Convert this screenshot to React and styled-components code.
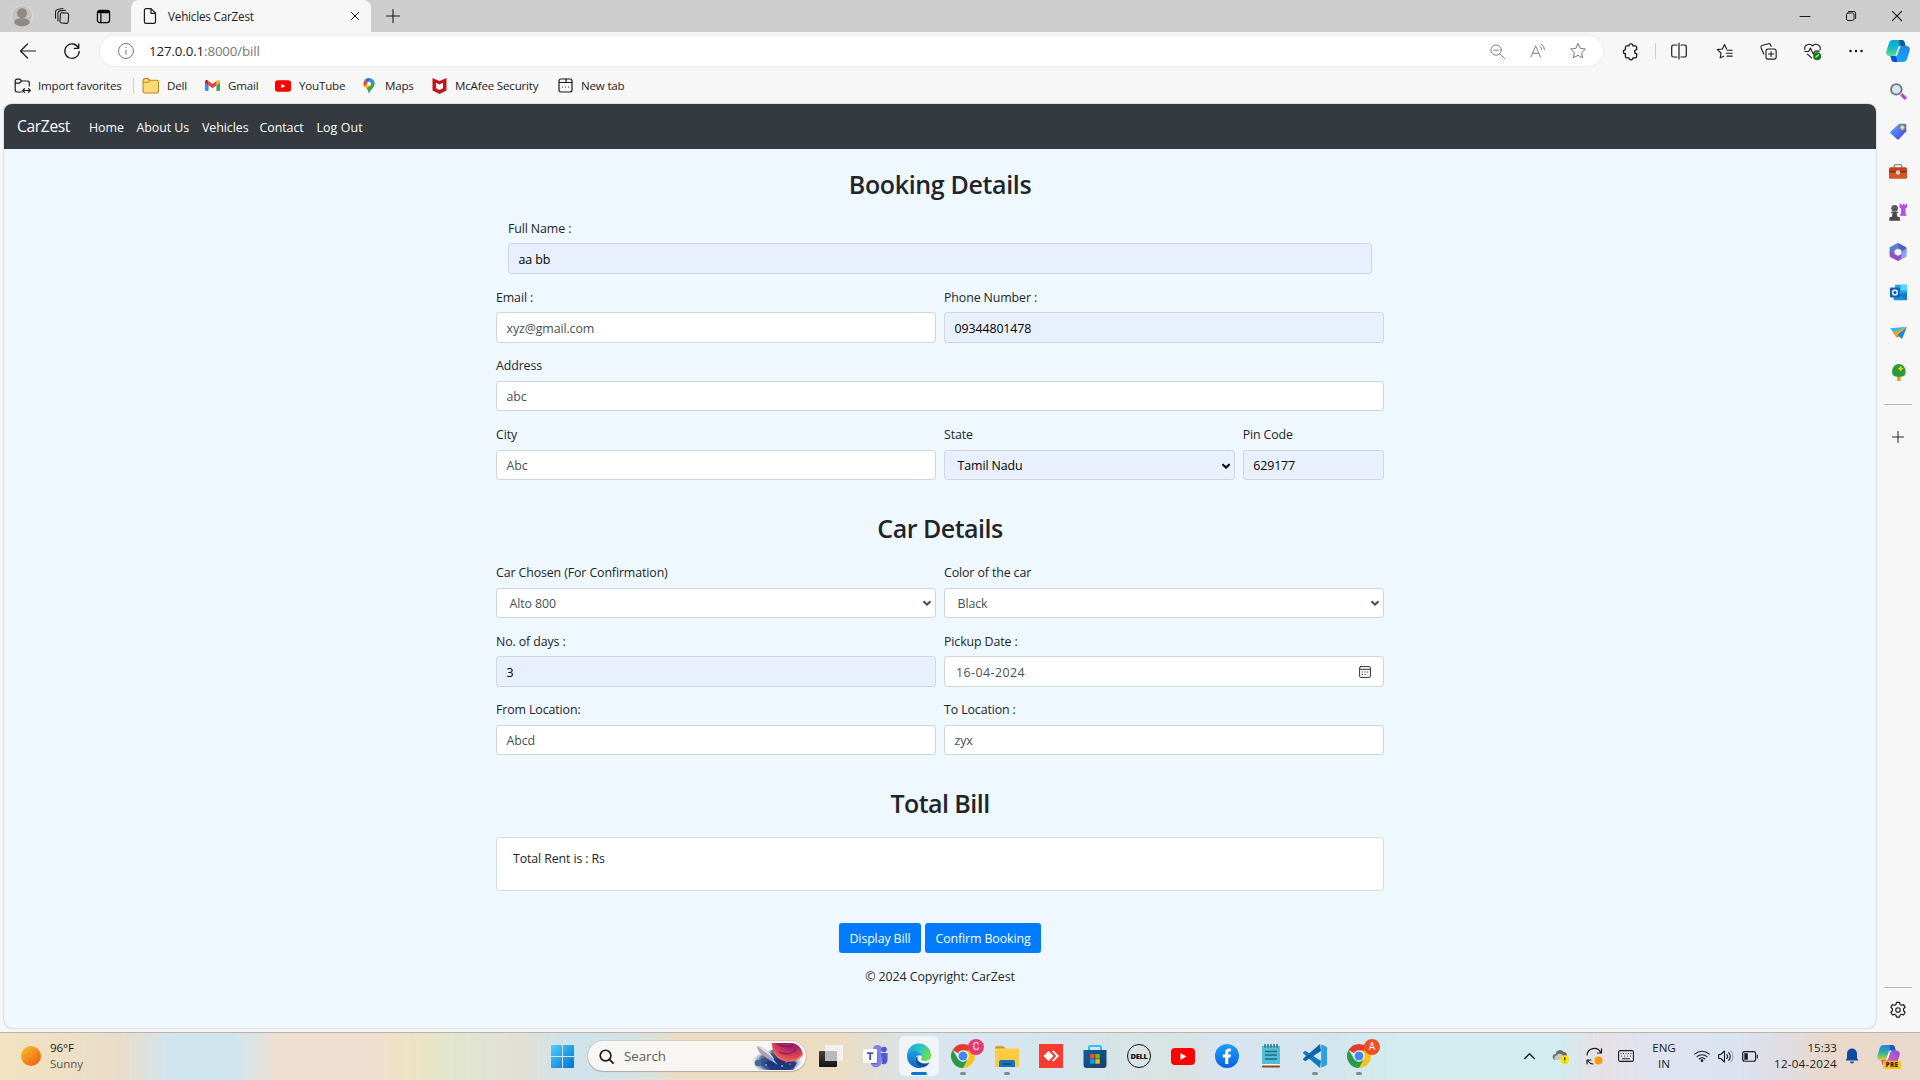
import React from 'react';
import styled, { createGlobalStyle } from 'styled-components';

const Global = createGlobalStyle`
  * { box-sizing: border-box; }
  html, body { margin: 0; padding: 0; width: 1920px; height: 1080px; overflow: hidden; }
  body { font-family: 'Segoe UI', 'Open Sans', 'Noto Sans', sans-serif; background: #f7f7f7; }
  svg { display: block; flex: none; overflow: visible; }
`;

const Text = styled.span`
  font-size: ${(p) => p.$size || 12.4}px;
  letter-spacing: ${(p) => (p.$ls === undefined ? -0.12 : p.$ls)}px;
  font-weight: ${(p) => p.$weight || 400};
  color: ${(p) => p.$color || 'inherit'};
  white-space: pre;
`;

/* ---------- layout shells ---------- */
const Screen = styled.div`
  width: 1920px;
  height: 1080px;
  display: flex;
  flex-direction: column;
  background: #f7f7f7;
  color: #1b1b1b;
`;
const TabStrip = styled.header`
  height: 32px;
  flex: none;
  display: flex;
  align-items: center;
  background: #cdcdcd;
`;
const Slot = styled.div`
  width: ${(p) => p.$w}px;
  height: 100%;
  display: flex;
  align-items: center;
  justify-content: center;
  flex: none;
`;
const Spacer = styled.div`
  flex: ${(p) => (p.$w ? 'none' : 1)};
  width: ${(p) => (p.$w ? p.$w + 'px' : 'auto')};
`;
const Tab = styled.div`
  width: 240px;
  height: 32px;
  display: flex;
  align-items: center;
  background: #f7f7f7;
  border-radius: 8px 8px 0 0;
  padding: 0 12px 1px 12px;
  gap: 11px;
  margin-left: 6px;
`;
const Toolbar = styled.div`
  height: 38px;
  flex: none;
  display: flex;
  align-items: center;
`;
const AddressBar = styled.div`
  width: 1503px;
  height: 30px;
  border-radius: 15px;
  background: #fff;
  box-shadow: 0 0 3px rgba(0, 0, 0, 0.09);
  display: flex;
  align-items: center;
  padding: 0 5px 0 18px;
`;
const Favorites = styled.nav`
  height: 34px;
  flex: none;
  padding: 0 0 3px 14px;
  display: flex;
  align-items: center;
`;
const Favorite = styled.div`
  display: flex;
  align-items: center;
  gap: ${(p) => p.$gap || 8}px;
  width: ${(p) => p.$w}px;
`;
const Rule = styled.div`
  width: 1px;
  height: 16px;
  background: #cfcfcf;
`;
const Body = styled.div`
  height: 928px;
  flex: none;
  display: flex;
  padding-left: 4px;
`;
const Page = styled.main`
  width: 1872px;
  height: 924px;
  background: #f0f8ff;
  border-radius: 8px;
  overflow: hidden;
  box-shadow: 0 0 2px rgba(0, 0, 0, 0.35);
`;
const Sidebar = styled.aside`
  width: 44px;
  height: 961px;
  display: flex;
  flex-direction: column;
  align-items: center;
  margin-top: -33px;
`;
const SideSlot = styled.div`
  height: ${(p) => p.$h || 40.2}px;
  flex: none;
  display: flex;
  align-items: center;
  justify-content: center;
`;
const SideRule = styled.div`
  width: 28px;
  height: 1px;
  flex: none;
  background: #b8b8b8;
  margin-top: ${(p) => p.$top || 0}px;
`;

/* ---------- CarZest page ---------- */
const Navbar = styled.nav`
  height: 45px;
  background: #343a40;
  color: #fff;
  display: flex;
  align-items: center;
  padding: 0 0 2px 13px;
`;
const NavItem = styled.a`
  width: ${(p) => p.$w}px;
`;
const Form = styled.section`
  width: 888px;
  margin: 0 auto;
  color: #212529;
`;
const Heading = styled.h2`
  margin: 0;
  padding-top: ${(p) => p.$top}px;
  height: ${(p) => p.$h}px;
  text-align: center;
  font-size: 25px;
  line-height: 30.7px;
  font-weight: 500;
`;
const Row = styled.div`
  display: grid;
  grid-template-columns: ${(p) => p.$cols || '1fr'};
  gap: 8px;
  padding: 0 ${(p) => p.$inset || 0}px;
  margin-bottom: 12.8px;
`;
const Field = styled.div`
  display: flex;
  flex-direction: column;
  min-width: 0;
`;
const Label = styled.label`
  height: 25.6px;
  line-height: 18.4px;
`;
const Control = styled.div`
  height: 30.4px;
  border: 1px solid #ced4da;
  border-radius: 3.2px;
  background: ${(p) => (p.$filled ? '#e8f0fe' : '#fff')};
  color: ${(p) => (p.$filled ? '#000' : '#495057')};
  display: flex;
  align-items: center;
  justify-content: space-between;
  padding: 1.4px ${(p) => p.$right || 3}px 0 ${(p) => p.$left || 9.6}px;
`;
const BillCard = styled.div`
  height: 54px;
  border: 1px solid #d9dcdf;
  border-radius: 3.2px;
  background: #fff;
  padding: 9px 16px;
  line-height: 20px;
`;
const Actions = styled.div`
  display: flex;
  justify-content: center;
  gap: 4px;
  margin-top: 32px;
`;
const Button = styled.button`
  width: ${(p) => p.$w}px;
  height: 30px;
  border: 0;
  border-radius: 3px;
  background: #007bff;
  color: #fff;
  font-family: inherit;
  padding: 0;
`;
const Copyright = styled.footer`
  margin-top: 12px;
  text-align: center;
  line-height: 20px;
`;

/* ---------- Taskbar ---------- */
const Taskbar = styled.footer`
  height: 48px;
  flex: none;
  border-top: 1px solid #b3b4b4;
  padding-bottom: 1px;
  display: flex;
  align-items: center;
  background: linear-gradient(90deg, #f2e2bf 0, #ecdfc6 80px, #eadccb 120px, #d1e5ee 170px, #d1e5ee 235px, #efdfd0 280px, #efdfd0 370px, #eee3c2 410px, #e1e6cf 450px, #e0e0d6 525px, #cfe3ec 575px, #d6e2e2 640px, #ecdcc2 680px, #ecdcc2 840px, #e0dfda 880px, #d8e5ef 930px, #d5e5ee 1040px, #d8e4e4 1140px, #d9e3e2 1180px, #d9e4f1 1230px, #d4e5ec 1330px, #d2ecef 1400px, #d2ecef 1560px, #e6e0e4 1600px, #dfe3f0 1650px, #dbe3f0 1740px, #e0dce2 1785px, #ead8ca 1830px, #ecd9ce 1920px);
`;
const Stack = styled.div`
  width: ${(p) => p.$w}px;
  display: flex;
  flex-direction: column;
  align-items: ${(p) => p.$align || 'flex-start'};
  line-height: 16px;
  flex: none;
`;
const SearchPill = styled.div`
  width: 218px;
  height: 30px;
  margin: 0 3px 0 14px;
  border-radius: 15px;
  background: #f7f6f2;
  box-shadow: 0 0 0 1px rgba(150, 150, 140, 0.25), 0 1px 1px rgba(0, 0, 0, 0.2);
  display: flex;
  align-items: center;
  gap: 10px;
  padding: 0 3px 0 11px;
`;
const AppTile = styled.div`
  position: relative;
  width: 38px;
  height: 38px;
  margin: 0 3px;
  flex: none;
  display: flex;
  align-items: center;
  justify-content: center;
  border-radius: 4px;
  background: ${(p) => (p.$active ? 'rgba(255,255,255,.6)' : 'transparent')};
  box-shadow: ${(p) => (p.$active ? '0 0 0 1px rgba(255,255,255,.5)' : 'none')};
  &::after {
    content: '';
    position: absolute;
    bottom: 0;
    left: 50%;
    transform: translateX(-50%);
    width: ${(p) => (p.$active ? 16 : p.$running ? 6 : 0)}px;
    height: 3px;
    border-radius: 2px;
    background: ${(p) => (p.$active ? '#0078d4' : '#858b8f')};
  }
`;
const Badge = styled.span`
  position: absolute;
  top: 2px;
  right: -2px;
  width: 16px;
  height: 16px;
  border-radius: 50%;
  background: ${(p) => p.$bg};
  color: #fff;
  font: 10px/16px Roboto, sans-serif;
  text-align: center;
`;

/* ---------- icons ---------- */
const Line = ({ w = 20, h, vb, c = '#1b1b1b', sw = 1.2, children }) => (
  <svg width={w} height={h || w} viewBox={vb || '0 0 20 20'} fill="none" stroke={c} strokeWidth={sw} strokeLinecap="round" strokeLinejoin="round">{children}</svg>
);
const Pic = ({ w = 24, h, vb = '0 0 24 24', children }) => (
  <svg width={w} height={h || w} viewBox={vb}>{children}</svg>
);

const Avatar = () => (
  <Pic w={22}>
    <circle cx="12" cy="12" r="11.5" fill="#c3c1bf" stroke="#dddbd8" />
    <circle cx="12" cy="9" r="5.4" fill="#8d8883" />
    <path d="M3.5 19.5c0-4 4-5 8.5-5s8.500 1 8.500 5a11 11 0 0 1-17 0z" fill="#8d8883" />
  </Pic>
);
const Workspaces = () => (
  <Line w={18}>
    <path d="M9.800 6.500h5.400a2 2 0 0 1 2 2v7.500a2 2 0 0 1-2 2H10a2 2 0 0 1-2-2V8.500a2 2 0 0 1 1.800-2z" transform="rotate(4 12 12)" />
    <path d="M5.500 15.500V7a2.800 2.800 0 0 1 2.300-2.700L14 3.600M2.800 12.500V5.500A2.800 2.800 0 0 1 5 2.800l6-1.200" />
  </Line>
);
const TabActions = () => (
  <Line w={15} vb="0 0 16 16" c="#000" sw={1.3}>
    <rect x="1.500" y="1.500" width="13" height="13" rx="2.500" />
    <path d="M2.500 3.200h11" strokeWidth="2.600" />
    <path d="M5.200 5v9" strokeWidth="1.300" />
  </Line>
);
const FileIcon = () => (
  <Line w={14} h={16} vb="0 0 14 16"><path d="M3 .7h5l4.500 4.500v8.500a1.600 1.600 0 0 1-1.600 1.600H3a1.600 1.600 0 0 1-1.600-1.600V2.300A1.600 1.600 0 0 1 3 .7zM8 .9v4.500h4.300" /></Line>
);
const Cross = ({ w = 8 }) => <Line w={w} vb="0 0 8 8" sw={1}><path d="M.3.3l7.400 7.400M7.700.3L.3 7.700" /></Line>;
const Plus = ({ w = 14 }) => <Line w={w} vb="0 0 14 14" sw={1.1}><path d="M7 .5v13M.5 7h13" /></Line>;
const StarPath = 'M10 1.800l2.500 5.200 5.700.8-4.100 4 1 5.700-5.100-2.700-5.100 2.700 1-5.700-4.100-4 5.700-.8z';

const FolderGold = () => (
  <Pic w={17} vb="0 0 16 16"><path d="M1 3a1.500 1.500 0 0 1 1.500-1.500h3.200L7.500 3H14A1.500 1.500 0 0 1 15.500 4.500v9A1.500 1.500 0 0 1 14 15H2.500A1.500 1.500 0 0 1 1 13.500z" fill="#ffd977" stroke="#b58a18" /><path d="M1 5h4.800L7.500 3.200" fill="none" stroke="#b58a18" /></Pic>
);
const Gmail = () => (
  <Pic w={15} h={11} vb="0 0 30 22">
    <path d="M2 22h5V10L0 5v15a2 2 0 0 0 2 2z" fill="#4285f4" /><path d="M23 22h5a2 2 0 0 0 2-2V5l-7 5z" fill="#34a853" />
    <path d="M23 2v8.500l7-5V3c0-2.800-3-4-5-2.500z" fill="#fbbc04" /><path d="M7 10.500V2l8 6 8-6v8.500l-8 6z" fill="#ea4335" /><path d="M0 3v2.500l7 5V2L5 .5C3-1 0 .2 0 3z" fill="#c5221f" />
  </Pic>
);
const YouTube = ({ w = 16, h = 12 }) => (
  <Pic w={w} h={h} vb="0 0 24 17"><rect width="24" height="17" rx="4" fill="#f00" /><path d="M9.500 5v7l6-3.500z" fill="#fff" /></Pic>
);
const Maps = () => (
  <Pic w={12} h={16} vb="0 0 12 17">
    <path d="M6 17C5.400 14 4.700 12.500 3 10.500L9.500 3 11 2.700c2 3 .8 6-.9 8C7.500 13.500 6.800 14.500 6 17z" fill="#34a853" />
    <path d="M1 8.800L5 4l3.500 4L3.200 11C2.300 10 1.500 9.800 1 8.800z" fill="#fbbc04" /><path d="M1.400 2.200L5 5 .9 9C-.3 6.500 0 4 1.400 2.200z" fill="#ea4335" />
    <path d="M1.400 2.200A6 6 0 0 1 7.700.2L5 5z" fill="#1a73e8" /><path d="M7.700.2c1.500.4 2.700 1.400 3.400 2.700L7.800 7 5 5z" fill="#4285f4" /><circle cx="6" cy="6" r="2.100" fill="#fff" />
  </Pic>
);
const McAfee = () => (
  <Pic w={15} h={16} vb="0 0 15 16"><path d="M.5 0L7.500 3 14.500 0v12.500L7.500 16l-7-3.500z" fill="#c01818" /><path d="M4 4.700L7.500 6.500 11 4.700v5.600l-3.500 1.800L4 10.300z" fill="#f7f7f7" /></Pic>
);
const PreTag = styled.span`
  position: absolute;
  left: 6px;
  bottom: -1px;
  width: 18px;
  height: 8px;
  border-radius: 1px;
  background: #fcc419;
  color: #2b2100;
  font: 800 6.500px/8px 'Open Sans', sans-serif;
  letter-spacing: 0.3px;
  text-align: center;
`;
const CopilotBox = styled.div`
  position: relative;
  width: 24px;
  height: 24px;
`;
const Copilot = ({ pre }) => (
  <CopilotBox>
    <Pic w={pre ? 23 : 24}>
      <defs>
        <linearGradient id={pre ? 'cpa' : 'cpb'} x1="0" y1="0" x2="0" y2="1">
          <stop offset="0" stopColor={pre ? '#2b7de9' : '#0aa4e0'} /><stop offset=".5" stopColor={pre ? '#27b3a0' : '#18b8c8'} /><stop offset="1" stopColor={pre ? '#e8cf2a' : '#5fe08e'} />
        </linearGradient>
        <linearGradient id={pre ? 'cpc' : 'cpd'} x1="1" y1="0" x2="0" y2="1">
          <stop offset="0" stopColor={pre ? '#8a4cf0' : '#1f7fe8'} /><stop offset="1" stopColor={pre ? '#ff6d7a' : '#12b6f5'} />
        </linearGradient>
      </defs>
      <path d="M7 1h8.500c2 0 2.800 1.200 3.200 2.800L19.500 7h-6L10 17H4c-3 0-4.400-2-3.500-5L3 4C3.600 2 5 1 7 1z" fill={`url(#${pre ? 'cpa' : 'cpb'})`} />
      <path d="M13 1h2.500c2 0 2.800 1.200 3.200 2.800L19.500 7h-4c-1.500 0-2-1-2.200-2z" fill={pre ? '#1b58c8' : '#0a5a94'} />
      <path d="M17 23H8.500c-2 0-2.800-1.200-3.200-2.800L4.500 17H10l4-10h6c3 0 4.400 2 3.500 5L21 20c-.6 2-2 3-4 3z" fill={`url(#${pre ? 'cpc' : 'cpd'})`} />
      <path d="M11 23H8.500c-2 0-2.800-1.200-3.200-2.800L4.500 17h4c1.500 0 2 1 2.200 2z" fill={pre ? '#e2485c' : '#1748d8'} />
      <path d="M13.500 7h2.200c-1 0-1.600.8-2 2l-2 6c-.4 1.300-1.200 2-2.500 2H8c1 0 1.600-.8 2-2l2-6c.3-1 .7-2 1.500-2z" fill="#f4fbff" />
    </Pic>
    {pre && <PreTag>PRE</PreTag>}
  </CopilotBox>
);
const Chrome = () => (
  <Pic>
    <path d="M12 12L1.600 6A12 12 0 0 1 22.400 6z" fill="#e33b2e" />
    <path d="M12 6.500h10.600A12 12 0 0 1 12 24l5-9z" fill="#fcc31e" />
    <path d="M1.600 6l5.600 9L12 17.500 17 15l-5 9A12 12 0 0 1 1.600 6z" fill="#2a9a48" />
    <circle cx="12" cy="12" r="5.700" fill="#fff" /><circle cx="12" cy="12" r="4.500" fill="#4285f4" />
  </Pic>
);
const Edge = () => (
  <Pic>
    <defs>
      <linearGradient id="e1" x1="0" y1="0" x2="1" y2=".4"><stop offset="0" stopColor="#1b9de2" /><stop offset=".6" stopColor="#2fc6c0" /><stop offset="1" stopColor="#66e04e" /></linearGradient>
      <linearGradient id="e2" x1="0" y1="0" x2="0" y2="1"><stop offset="0" stopColor="#1b9de2" /><stop offset="1" stopColor="#1266c0" /></linearGradient>
    </defs>
    <path d="M0 12A12 12 0 0 1 24 11c.2 4-3 6-6.500 6-2.500 0-4-.9-3.300-2 1.300-2 .8-5.500-2.700-6.800C7 6.500 2 8 0 12z" fill="url(#e1)" />
    <path d="M0 12c.5-3.500 4-5 7.500-5 4 0 7.500 2.500 7.500 5.500-1.500-2-5.500-1.500-6.500 1.500-1.200 4 1.500 8.500 6 9.700A12 12 0 0 1 0 12z" fill="url(#e2)" />
    <path d="M8.500 14c-1.300 4.500 2 9.500 6.500 9.600 3.500-.5 6-2.600 7.500-5.200-3.500 1.700-8 1.500-10.500-.8-1.600-1.400-2-3.500-1-5.200-1 .3-2 .9-2.500 1.600z" fill="#11509e" />
  </Pic>
);
const Start = () => (
  <Pic w={23} vb="0 0 23 23">
    <defs><linearGradient id="win" gradientUnits="userSpaceOnUse" x1="0" y1="0" x2="23" y2="23"><stop offset="0" stopColor="#4fd0fb" /><stop offset="1" stopColor="#0072d3" /></linearGradient></defs>
    <path d="M0 1a1 1 0 0 1 1-1h10v11H0zM12 0h10a1 1 0 0 1 1 1v10H12zM0 12h11v11H1a1 1 0 0 1-1-1zM12 12h11v10a1 1 0 0 1-1 1H12z" fill="url(#win)" />
  </Pic>
);
const SearchArt = () => (
  <Pic w={50} h={27} vb="0 0 50 27">
    <defs>
      <radialGradient id="pl" cx=".6" cy=".2" r=".8"><stop offset="0" stopColor="#e0566e" /><stop offset=".5" stopColor="#a81c6a" /><stop offset="1" stopColor="#ee5a50" /></radialGradient>
      <radialGradient id="sk" cx=".5" cy=".5" r=".5"><stop offset="0" stopColor="#223f86" /><stop offset=".65" stopColor="#33549a" /><stop offset="1" stopColor="#8fa6cc" stopOpacity="0" /></radialGradient>
      <clipPath id="art"><path d="M0 0h38a12 13.500 0 0 1 0 27H0z" /></clipPath>
    </defs>
    <g clipPath="url(#art)">
      <ellipse cx="24" cy="19" rx="25" ry="13" fill="url(#sk)" />
      <path d="M12 20L30 12l14 8-4 7H18z" fill="#1d3478" opacity=".85" />
      <circle cx="36" cy="1" r="17" fill="url(#pl)" />
      <path d="M20 6A17 17 0 0 0 50 11" fill="none" stroke="#f4705c" strokeWidth="1.300" />
      <path d="M24 1c5 3 12 3 18 0M26 9c6 3 12 2 17-2" fill="none" stroke="#7a1058" strokeWidth="1.500" opacity=".6" />
    </g>
    <path d="M4 3c5 0 13 6 17 13l-2 2C12 15 4 9 4 3z" fill="#a9a3ae" /><path d="M4 3c5 0 13 6 17 13L4 3z" fill="#e3dfe4" />
    <path d="M9 12l-3 4 6-1zM17 8l4-2-1 5z" fill="#77717f" /><path d="M20 16l5 6-6-4z" fill="#9ed8ff" />
    <circle cx="5" cy="20" r="3.200" fill="#3f6c8c" /><circle cx="13" cy="22" r=".7" fill="#fff" /><circle cx="29" cy="23" r=".8" fill="#fff" /><circle cx="37" cy="21" r=".6" fill="#fff" /><circle cx="33" cy="19" r=".5" fill="#fff" />
  </Pic>
);
const TaskView = () => (
  <Pic vb="0 0 24 24"><defs><linearGradient id="tv" x1="0" y1="0" x2="0" y2="1"><stop offset="0" stopColor="#454545" /><stop offset="1" stopColor="#141414" /></linearGradient></defs><rect x="0" y="7" width="18" height="16" rx="1" fill="url(#tv)" /><rect x="6" y="1" width="18" height="16" rx="1" fill="#f1f1f1" /><path d="M6 7h12v10H6z" fill="#b9b9b9" /></Pic>
);
const Teams = () => (
  <Pic><circle cx="14.500" cy="5.500" r="4.500" fill="#7b83eb" /><circle cx="21" cy="5.500" r="2.800" fill="#5059c9" /><path d="M8 9h10.500v9a5.500 5.500 0 0 1-10.500 2z" fill="#7b83eb" /><path d="M18 9h6.500v7.500a4 4 0 0 1-5.500 3.500z" fill="#5059c9" /><path d="M8 9h6.500v11H8z" fill="#3f489c" opacity=".55" /><rect y="5" width="14" height="14" fill="#fff" /><path d="M4 8.200h6.300v1.900H8.100v6H6.200v-6H4z" fill="#4b53bc" /></Pic>
);
const Explorer = () => (
  <Pic><path d="M0 3.500A1.500 1.500 0 0 1 1.500 2H8l2.500 2.500V10H0z" fill="#dc9a10" /><rect y="4.500" width="24" height="18.500" rx="1" fill="#fdcb3f" /><path d="M0 6h9l2-1.500h13V5H0z" fill="#ffde7a" /><path d="M4 23v-5a2 2 0 0 1 2-2h12a2 2 0 0 1 2 2v5z" fill="#1672bc" /><path d="M8 19h8v2H8z" fill="#0c4f90" /></Pic>
);
const AnyDesk = () => (
  <Pic><rect width="24" height="24" fill="#fb3b30" /><path d="M4.500 12l5-5 5 5-5 5z" fill="#fff" /><path d="M13 7.500l1.300-1.300L20 12l-5.700 5.800L13 16.500l4.300-4.500z" fill="#fff" /></Pic>
);
const Store = () => (
  <Pic><defs><linearGradient id="st" x1="0" y1="0" x2="1" y2="1"><stop offset="0" stopColor="#0f5c9c" /><stop offset="1" stopColor="#1c3e6e" /></linearGradient></defs><path d="M6 7V3.500A1.500 1.500 0 0 1 7.500 2h9A1.500 1.500 0 0 1 18 3.500V7" fill="none" stroke="#2fbdf3" strokeWidth="2" /><path d="M.5 6h23v15a3 3 0 0 1-3 3h-17a3 3 0 0 1-3-3z" fill="url(#st)" /><path d="M7 10h4.500v4.500H7z" fill="#f25022" /><path d="M12.300 10h4.500v4.500h-4.500z" fill="#7fba00" /><path d="M7 15.200h4.500v4.500H7z" fill="#00a4ef" /><path d="M12.300 15.200h4.500v4.500h-4.500z" fill="#ffb900" /></Pic>
);
const DellRing = styled.div`
  width: 24px;
  height: 24px;
  border: 1.500px solid #111;
  border-radius: 50%;
  display: flex;
  align-items: center;
  justify-content: center;
  color: #111;
  font: 800 7.500px/22px 'Open Sans', sans-serif;
  letter-spacing: -0.4px;
`;
const Facebook = () => (
  <Pic><defs><linearGradient id="fb" x1="0" y1="0" x2="0" y2="1"><stop offset="0" stopColor="#19a0fb" /><stop offset="1" stopColor="#0a62e3" /></linearGradient></defs><circle cx="12" cy="12" r="12" fill="url(#fb)" /><path d="M10.200 20v-6.500H7.700v-3h2.500V8.600c0-2.600 1.500-4 3.800-4 1 0 2 .2 2 .2v2.500h-1.200c-1.200 0-1.500.7-1.500 1.500v1.700h2.700l-.5 3h-2.200V20z" fill="#fff" /></Pic>
);
const Notepad = () => (
  <Pic><path d="M3 20h18v2.500a1 1 0 0 1-1 1H4a1 1 0 0 1-1-1z" fill="#8a4a18" /><rect x="3" y="2" width="18" height="19" fill="#52bcd3" /><path d="M3 20h18v1.500H3z" fill="#f5f5f5" /><path d="M6 7.500h12M6 11h12M6 15h12" stroke="#1a6d8c" strokeWidth="1.400" /><path d="M6 0v3.500M9 0v3.500M12 0v3.500M15 0v3.500M18 0v3.500" stroke="#185a78" strokeWidth="1.300" /></Pic>
);
const VSCode = () => (
  <Pic><path d="M2.300 6.700L.3 8.200c-.4.400-.4.900 0 1.300L17 24l1-7z" fill="#1279c4" /><path d="M2.300 17.300L.3 15.800c-.4-.4-.4-.9 0-1.300L17 0l1 7z" fill="#0a66ad" /><path d="M17 0l6 2.500a1.500 1.500 0 0 1 1 1.400v16.200a1.500 1.500 0 0 1-1 1.400L17 24c.7 0 1.200-.6 1.200-1.200V1.200C18.200.6 17.700 0 17 0z" fill="#2b9fe8" /></Pic>
);
const GearPath = 'M8.300 1.500h3.400l.5 2.300 1.700 1 2.300-.8 1.700 3-1.700 1.600v2.200l1.700 1.700-1.700 3-2.300-.8-1.700 1-.5 2.300H8.300l-.5-2.300-1.700-1-2.300.8-1.700-3 1.700-1.700V8.600L2.100 7l1.700-3 2.300.8 1.700-1z';

const Chevron = ({ c }) => <Line w={10} h={6} vb="0 0 10 6" c={c} sw={2}><path d="M1.400 1.200L5 4.600l3.600-3.400" strokeLinecap="butt" strokeLinejoin="miter" /></Line>;
const Calendar = () => (
  <Line w={12} h={12} vb="0 0 12 12" c="#333" sw={1}><rect x=".6" y=".6" width="10.800" height="10.800" rx="1.200" /><path d="M1 3.300h10" /><path d="M2.800 6h1.200M5.400 6h1.200M8 6h1.200M2.800 8.500h1.200M5.400 8.500h1.200" strokeLinecap="butt" strokeWidth="1.200" /></Line>
);

const TextField = ({ label, value, filled, select, date }) => (
  <Field>
    <Label><Text>{label}</Text></Label>
    <Control $filled={filled} $left={select ? 12.6 : date ? 11 : 9.6} $right={date ? 12 : 3}>
      <Text $ls={date ? 0.45 : undefined}>{value}</Text>
      {select && <Chevron c={filled ? '#000' : '#495057'} />}
      {date && <Calendar />}
    </Control>
  </Field>
);

const sideIcons = [
  <Pic w={17} key="s"><circle cx="9" cy="9" r="7.500" fill="#cfeafc" stroke="#757575" strokeWidth="2.600" /><path d="M16 16l6.500 6.500" stroke="#b341e8" strokeWidth="4.500" /></Pic>,
  <Pic w={17} key="t"><defs><linearGradient id="tg" x1="0" y1="0" x2="1" y2="1"><stop offset="0" stopColor="#62b4f7" /><stop offset="1" stopColor="#4338e8" /></linearGradient></defs><path d="M13 1h8a2 2 0 0 1 2 2v8.500L12.500 23a2 2 0 0 1-2.500 0L.8 14.500a2 2 0 0 1 0-2.500z" fill="url(#tg)" /><circle cx="17.500" cy="6.500" r="2.500" fill="#e9edf7" stroke="#f5c000" strokeWidth="1.500" /></Pic>,
  <Pic w={18} key="b"><path d="M7 7.500V5A1.500 1.500 0 0 1 8.500 3.500h7A1.500 1.500 0 0 1 17 5v2.500" fill="none" stroke="#8c8c8c" strokeWidth="1.800" /><rect y="7" width="24" height="15" rx="2" fill="#c5421a" /><path d="M0 13h24v7a2 2 0 0 1-2 2H2a2 2 0 0 1-2-2z" fill="#d75426" /><path d="M0 12h24v2H0z" fill="#8c2d10" /><circle cx="12" cy="14" r="3" fill="#c9d3d5" /></Pic>,
  <Pic w={18} key="c"><path d="M14 1h2.500v2h2V1h2v2h1.500V1H24v5l-2 1v7l2 3H14l2-3V7l-2-1z" fill="#b44af2" /><circle cx="7.500" cy="7" r="4.500" fill="#5b5b5b" /><path d="M3 11.500h9v2h-2l1.500 5H14l1 5H0l1-5h2.500l1.500-5H3z" fill="#494949" /></Pic>,
  <Pic w={18} key="o"><path d="M12 0l11 6v12l-11 6L1 18V6z" fill="#6c7ae0" /><path d="M12 0l11 6v7l-6.500-3.500L12 7z" fill="#4f5fc0" /><path d="M23 8v10l-11 6-4-3.500 8.500-6 3-5z" fill="#86a6f4" /><path d="M1 12V6L12 0l2.500 2L7.500 7v8L1 12z" fill="#4f84cf" /><path d="M1 11l6.500 4 4.500 2.500 5-3-1 6-4 3.500L1 18z" fill="#9350bb" /><path d="M12 7.200l4.500 2.500v4.800L12 17l-4.500-2.500V9.700z" fill="#f7f7f7" /></Pic>,
  <Pic w={17} key="u"><path d="M7 1h17v14H7z" fill="#28a8ea" /><path d="M15 1h9v8h-9z" fill="#50d9ff" /><path d="M5 12h19v11H7a2 2 0 0 1-2-2z" fill="#1490df" /><path d="M24 12v11L12 16z" fill="#1a78c8" /><rect y="5" width="14" height="14" rx="1.500" fill="#0f64ba" /><circle cx="7" cy="12" r="3.400" fill="none" stroke="#fff" strokeWidth="2" /></Pic>,
  <Pic w={17} key="p"><path d="M0 6l24-2-18 9z" fill="#35b6f2" /><path d="M24 4L17 21l-7-6z" fill="#1b86e0" /><path d="M4 12L24 4 10 15l-1 4z" fill="#f5a21a" /><path d="M9 19l1-4 3 2.500z" fill="#c77a0a" /></Pic>,
  <Pic w={17} key="r"><path d="M10 16h5v7a1 1 0 0 1-1 1h-3a1 1 0 0 1-1-1z" fill="#f59a0c" /><path d="M12.500 0C18 0 22 5 22 11c0 5-2 7-9.500 7S3 16 3 11C3 5 7 0 12.500 0z" fill="#279c3c" /><path d="M15 3l1 2.500L18.500 6.500 16 7.500 15 10l-1-2.500-2.500-1 2.500-1z" fill="#ffd21e" stroke="#ffd21e" /></Pic>,
];

const nav = [['Home', 47.5], ['About Us', 65.5], ['Vehicles', 57.5], ['Contact', 57], ['Log Out', 60]];
const Fav = ({ children }) => <Text $size={11.6} $ls={-0.2}>{children}</Text>;

const taskApps = [
  { icon: <TaskView /> },
  { icon: <Teams /> },
  { icon: <Edge />, active: true },
  { icon: <Chrome />, running: true, badge: 'C', bg: '#e8396f' },
  { icon: <Explorer />, running: true },
  { icon: <AnyDesk /> },
  { icon: <Store /> },
  { icon: <DellRing>DELL</DellRing> },
  { icon: <YouTube w={24} h={17} /> },
  { icon: <Facebook /> },
  { icon: <Notepad /> },
  { icon: <VSCode />, running: true },
  { icon: <Chrome />, running: true, badge: 'A', bg: '#f04e23' },
];

export default function App() {
  return (
    <Screen>
      <Global />
      <TabStrip>
        <Spacer $w={2} />
        <Slot $w={40}><Avatar /></Slot>
        <Slot $w={40}><Workspaces /></Slot>
        <Slot $w={43}><TabActions /></Slot>
        <Tab><FileIcon /><Text $size={11.7} $ls={-0.2}>Vehicles CarZest</Text><Spacer /><Cross w={8} /></Tab>
        <Slot $w={43}><Plus /></Slot>
        <Spacer />
        <Slot $w={46}><Line w={10} vb="0 0 10 10" sw={1}><path d="M0 5.500h10" /></Line></Slot>
        <Slot $w={46}><Line w={10} vb="0 0 10 10" sw={1}><rect x=".5" y="2" width="7.500" height="7.500" rx="1.500" /><path d="M2.500.5H8A1.800 1.800 0 0 1 9.600 2.200V7.500" /></Line></Slot>
        <Slot $w={46}><Cross w={10} /></Slot>
      </TabStrip>
      <Toolbar>
        <Spacer $w={6} />
        <Slot $w={44}><Line w={16} vb="0 0 16 16"><path d="M.5 8h15M7.500 1L.5 8l7 7" /></Line></Slot>
        <Slot $w={44}><Line w={16} vb="0 0 16 16" sw={1.3}><path d="M14.500 5A7.200 7.200 0 1 0 15.200 8.500M14.800.8v4.500h-4.500" /></Line></Slot>
        <Spacer $w={6} />
        <AddressBar>
          <Line w={16} vb="0 0 16 16" c="#777" sw={1}><circle cx="8" cy="8" r="7.500" /><path d="M8 7v4.500M8 4.300v.3" /></Line>
          <Spacer $w={15} />
          <Text $size={13.3}>127.0.0.1</Text><Text $size={13.3} $color="#767676">:8000/bill</Text>
          <Spacer />
          <Slot $w={40}><Line w={15} vb="0 0 16 16" c="#777" sw={1}><circle cx="6.500" cy="6.500" r="5.500" /><path d="M10.500 10.500l5 5M4 6.500h5" /></Line></Slot>
          <Slot $w={41}><Line w={16} vb="0 0 17 17" c="#777" sw={1}><path d="M1 15L6 3l5 12M2.800 11h6.500M10.500 3.500a4 4 0 0 1 2 3.500M11.500.8a7.500 7.500 0 0 1 4 6.500" /></Line></Slot>
          <Slot $w={40}><Line w={18} c="#777" sw={1.1}><path d={StarPath} /></Line></Slot>
        </AddressBar>
        <Spacer $w={3} />
        <Slot $w={49}><Line w={17} vb="0 0 16 16" sw={1.2}><path d="M4.500 2.800h2a1.900 1.900 0 0 1 3.800 0h2.200A1.300 1.300 0 0 1 13.800 4v2.300a1.900 1.900 0 0 0 0 3.800v2.500a1.300 1.300 0 0 1-1.300 1.300h-2.200a1.900 1.900 0 0 1-3.800 0h-2a1.300 1.300 0 0 1-1.300-1.300V10.100a1.900 1.900 0 0 1 0-3.800V4a1.300 1.300 0 0 1 1.300-1.200z" /></Line></Slot>
        <Rule />
        <Slot $w={46}><Line w={16} vb="0 0 16 16" sw={1.2}><path d="M6 2H2.500A1.800 1.800 0 0 0 .7 3.800v8.400A1.800 1.800 0 0 0 2.500 14H6M10 2h3.500a1.800 1.800 0 0 1 1.800 1.800v8.400a1.800 1.800 0 0 1-1.800 1.800H10M8 0v16" /></Line></Slot>
        <Slot $w={44}><Line w={17} sw={1.3}><path d="M12.500 7L10 1.800 7.500 7l-6 .8 4.400 4-1 5.700L9 15.500M13 8.500h6M12 12h7M13 15.500h6" /></Line></Slot>
        <Slot $w={44}><Line w={17} sw={1.3}><rect x="7" y="7" width="12" height="12" rx="2.500" /><path d="M13 10v6M10 13h6M4.500 13L1.200 5.500a2 2 0 0 1 1-2.500L10 .9a2 2 0 0 1 2.500 1.200L13 4" /></Line></Slot>
        <Slot $w={44}><Line w={17} sw={1.3}><path d="M1 8C-.5 2 7-.5 10 3.500 13-.5 20.500 2 19 8M1 10h4.500l2-4 3.500 7 2-3.500h5M4 13l5 4.500" /><circle cx="15.500" cy="15.500" r="4" fill="#107c10" stroke="#107c10" /><path d="M14 16.500l3-2.500" stroke="#fff" /></Line></Slot>
        <Slot $w={44}><Line w={14} vb="0 0 14 4" h={4} sw={2.6}><path d="M1.500 2h.01M7 2h.01M12.500 2h.01" /></Line></Slot>
        <Slot $w={40}><Copilot /></Slot>
      </Toolbar>
      <Favorites>
        <Favorite $w={119} $gap={7}><Line w={17} h={16} vb="0 0 17 16" sw={1.2}><path d="M8 14H3a1.800 1.800 0 0 1-1.800-1.800V3A1.800 1.800 0 0 1 3 1.200h3L7.500 3h6a1.800 1.800 0 0 1 1.800 1.800V8M1.200 5.200H5.500L7.500 3M9 12.500h7M10.500 10.700l-1.800 1.800 1.800 1.800M14.500 10.700l1.800 1.800-1.800 1.800" /></Line><Fav>Import favorites</Fav></Favorite>
        <Rule />
        <Spacer $w={8} />
        <Favorite $w={63} $gap={8}><FolderGold /><Fav>Dell</Fav></Favorite>
        <Favorite $w={70}><Gmail /><Fav>Gmail</Fav></Favorite>
        <Favorite $w={88}><YouTube /><Fav>YouTube</Fav></Favorite>
        <Favorite $w={69} $gap={10}><Maps /><Fav>Maps</Fav></Favorite>
        <Favorite $w={126}><McAfee /><Fav>McAfee Security</Fav></Favorite>
        <Favorite $w={80}><Line w={15} vb="0 0 15 15" sw={1.2}><rect x="1" y="1" width="13" height="13" rx="2" /><path d="M1.500 4.500H14M8 1.200v3M4.500 9h.01M7.500 9h.01M10.500 9h.01" /></Line><Fav>New tab</Fav></Favorite>
      </Favorites>
      <Body>
        <Page>
          <Navbar>
            <NavItem $w={72}><Text $size={15.5} $ls={-0.3}>CarZest</Text></NavItem>
            {nav.map(([t, w]) => <NavItem key={t} $w={w}><Text $ls={t === 'Log Out' ? 0.1 : -0.05}>{t}</Text></NavItem>)}
          </Navbar>
          <Form>
            <Heading $top={20} $h={68.8}><Text $size={25} $weight={600} $ls={-0.35}>Booking Details</Text></Heading>
            <Row $inset={12}><TextField label="Full Name :" value="aa bb" filled /></Row>
            <Row $cols="1fr 1fr"><TextField label="Email :" value="xyz@gmail.com" /><TextField label="Phone Number :" value="09344801478" filled /></Row>
            <Row><TextField label="Address" value="abc" /></Row>
            <Row $cols="440px 290.67px 1fr"><TextField label="City" value="Abc" /><TextField label="State" value="Tamil Nadu" filled select /><TextField label="Pin Code" value="629177" filled /></Row>
            <Heading $top={20} $h={69}><Text $size={25} $weight={600} $ls={-0.5}>Car Details</Text></Heading>
            <Row $cols="1fr 1fr"><TextField label="Car Chosen (For Confirmation)" value="Alto 800" select /><TextField label="Color of the car" value="Black" select /></Row>
            <Row $cols="1fr 1fr"><TextField label="No. of days :" value="3" filled /><TextField label="Pickup Date :" value="16-04-2024" date /></Row>
            <Row $cols="1fr 1fr"><TextField label="From Location:" value="Abcd" /><TextField label="To Location :" value="zyx" /></Row>
            <Heading $top={20} $h={68.6}><Text $size={25} $weight={600} $ls={-0.55}>Total Bill</Text></Heading>
            <BillCard><Text>Total Rent is : Rs</Text></BillCard>
            <Actions><Button $w={82}><Text>Display Bill</Text></Button><Button $w={116}><Text>Confirm Booking</Text></Button></Actions>
            <Copyright><Text $ls={-0.08}>© 2024 Copyright: CarZest</Text></Copyright>
          </Form>
        </Page>
        <Sidebar>
          {sideIcons.map((icon, i) => <SideSlot key={i}>{icon}</SideSlot>)}
          <SideRule $top={11} />
          <SideSlot $h={64}><Plus w={12} /></SideSlot>
          <Spacer />
          <SideRule />
          <SideSlot $h={44}><Line w={18} sw={1.3}><path d={GearPath} /><circle cx="10" cy="10" r="2.500" /></Line></SideSlot>
        </Sidebar>
      </Body>
      <Taskbar>
        <Spacer $w={21} />
        <Pic w={20} vb="0 0 20 20"><defs><linearGradient id="sun" x1="0" y1="0" x2=".8" y2="1"><stop offset="0" stopColor="#f7c42c" /><stop offset="1" stopColor="#f0600e" /></linearGradient></defs><circle cx="10" cy="10" r="10" fill="url(#sun)" /></Pic>
        <Spacer $w={9} />
        <Stack $w={500}><Text $size={11.6} $ls={-0.1}>96°F</Text><Text $size={11.6} $color="#5a564d">Sunny</Text></Stack>
        <Spacer $w={1} />
        <Start />
        <SearchPill>
          <Line w={15} vb="0 0 16 16" sw={1.8}><circle cx="7" cy="7" r="5.700" /><path d="M11 11l4 4" /></Line>
          <Text $size={13.3} $color="#5c5c5c" $ls={-0.05}>Search</Text>
          <Spacer />
          <SearchArt />
        </SearchPill>
        {taskApps.map((a, i) => (
          <AppTile key={i} $active={a.active} $running={a.running}>
            {a.icon}
            {a.badge && <Badge $bg={a.bg}>{a.badge}</Badge>}
          </AppTile>
        ))}
        <Spacer />
        <Slot $w={42}><Line w={11} h={6} vb="0 0 11 6" sw={1.3}><path d="M.7 5.500L5.500.7l4.800 4.800" /></Line></Slot>
        <Slot $w={22}><Pic w={16} vb="0 0 16 16"><path d="M3 12a3 3 0 0 1-.5-6 4.500 4.500 0 0 1 8-2.200A4 4 0 0 1 14 8v4z" fill="#6b6b6b" /><path d="M2.500 12c-2-1-1.500-4 1-4.500C5.500 5 9 5.500 10 8l-2 4z" fill="#c9c9c9" /><circle cx="11.700" cy="11.700" r="4.500" fill="#fbe20a" /><path d="M11.700 9.300v3M11.700 13.700v.6" stroke="#333" strokeWidth="1.300" /></Pic></Slot>
        <Slot $w={44}><Line w={17} vb="0 0 17 17" sw={1.2}><path d="M1 7A7.300 7.300 0 0 1 14.500 4M15.500.8V5h-4M1 16v-4h4M2 13a7 7 0 0 0 5 3" /><circle cx="12.500" cy="12.500" r="4" fill="#fb9a0c" stroke="#fb9a0c" strokeWidth="0" /></Line></Slot>
        <Slot $w={20}><Line w={16} h={12} vb="0 0 16 12" sw={1.1}><rect x=".6" y=".6" width="14.800" height="10.800" rx="1.500" /><path d="M3 3.500h.01M5.500 3.500h.01M8 3.500h.01M10.500 3.500h.01M13 3.500h.01M3.500 6h.01M6.500 6h.01M9.500 6h.01M12.500 6h.01M4.500 8.700h7" /></Line></Slot>
        <Spacer $w={10} />
        <Stack $w={36} $align="center"><Text $size={11.6} $ls={0}>ENG</Text><Text $size={11.6} $ls={0}>IN</Text></Stack>
        <Spacer $w={10} />
        <Slot $w={20}><Line w={16} h={12} vb="0 0 16 12" sw={1.1}><path d="M.7 4.200a10.500 10.500 0 0 1 14.600 0M3 6.700a7.200 7.200 0 0 1 10 0M5.200 9a4 4 0 0 1 5.600 0" /><circle cx="8" cy="10.700" r=".8" fill="#1b1b1b" /></Line></Slot>
        <Slot $w={27}><Line w={16} h={13} vb="0 0 16 13" sw={1.1}><path d="M.7 4.500h2L6.500 1v11L2.700 8.500h-2zM8.800 4.500a3 3 0 0 1 0 4M10.700 2.700a5.500 5.500 0 0 1 0 7.600" /><path d="M12.800 1a8 8 0 0 1 0 11" stroke="#aaa" /></Line></Slot>
        <Slot $w={22}><Line w={16} h={11} vb="0 0 16 11" sw={1.1}><rect x=".6" y=".6" width="13" height="9.600" rx="2" /><path d="M15.300 4v3" /><path d="M2.500 2.500h3v6h-3z" fill="#1b1b1b" strokeWidth=".5" /></Line></Slot>
        <Stack $w={76} $align="flex-end"><Text $size={11.6} $ls={0}>15:33</Text><Text $size={11.6} $ls={0.25}>12-04-2024</Text></Stack>
        <Slot $w={30}><Pic w={14} h={16} vb="0 0 14 16"><path d="M7 .5a5 5 0 0 1 5 5V10l1.500 2.500H.5L2 10V5.500a5 5 0 0 1 5-5zM5 13.500h4a2 2 0 0 1-4 0z" fill="#0a4ba0" /></Pic></Slot>
        <Slot $w={44}><Copilot pre /></Slot>
        <Spacer $w={9} />
      </Taskbar>
    </Screen>
  );
}
